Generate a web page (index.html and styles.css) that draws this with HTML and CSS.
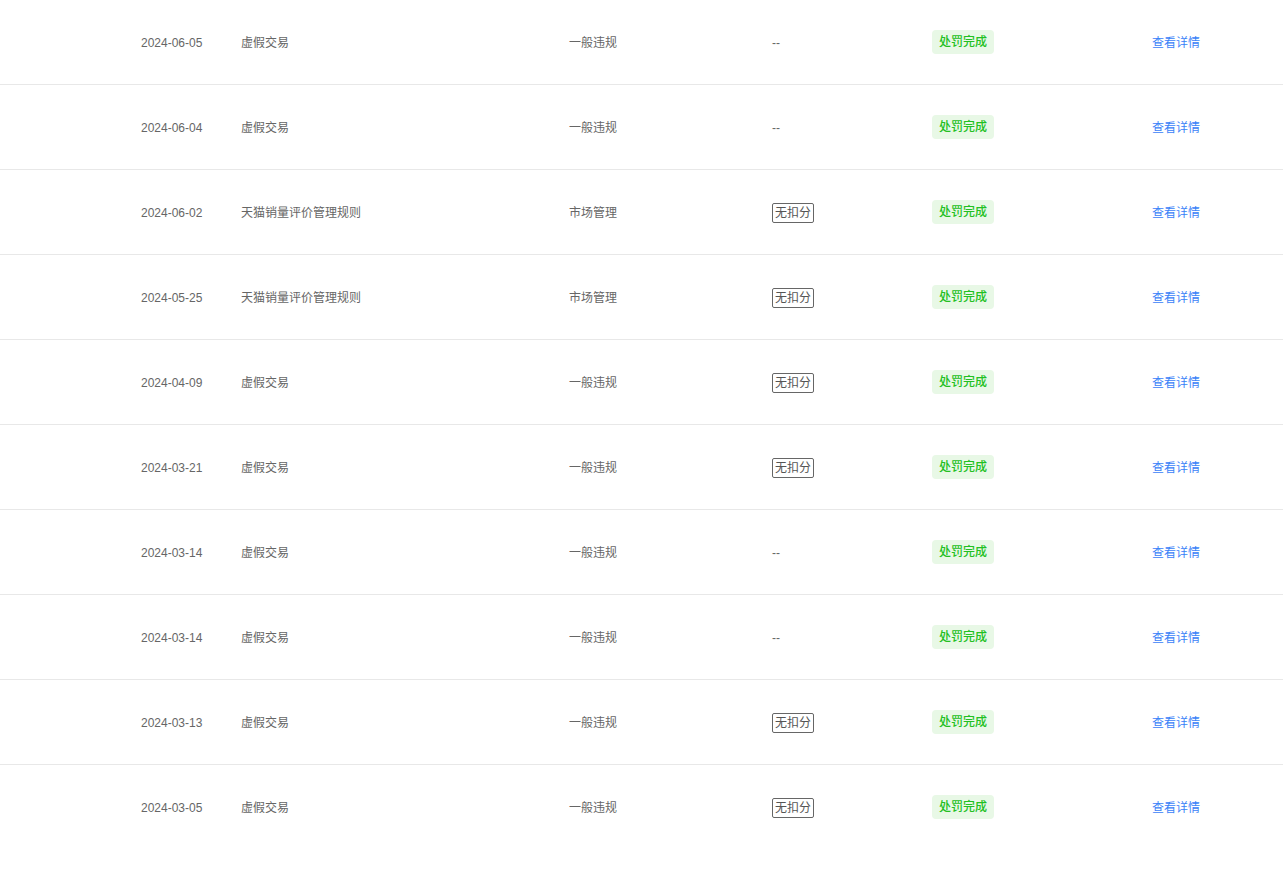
FILE: index.html
```html
<!DOCTYPE html>
<html lang="zh-CN">
<head>
<meta charset="utf-8">
<link rel="stylesheet" href="styles.css">
</head>
<body>
<div class="list">
  <div class="row"><span class="cell date">2024-06-05</span><span class="cell name">虚假交易</span><span class="cell type">一般违规</span><span class="cell score">--</span><span class="status"><span class="badge">处罚完成</span></span><span class="cell op"><a class="link">查看详情</a></span></div>
  <div class="row"><span class="cell date">2024-06-04</span><span class="cell name">虚假交易</span><span class="cell type">一般违规</span><span class="cell score">--</span><span class="status"><span class="badge">处罚完成</span></span><span class="cell op"><a class="link">查看详情</a></span></div>
  <div class="row"><span class="cell date">2024-06-02</span><span class="cell name">天猫销量评价管理规则</span><span class="cell type">市场管理</span><span class="cell score"><span class="tag">无扣分</span></span><span class="status"><span class="badge">处罚完成</span></span><span class="cell op"><a class="link">查看详情</a></span></div>
  <div class="row"><span class="cell date">2024-05-25</span><span class="cell name">天猫销量评价管理规则</span><span class="cell type">市场管理</span><span class="cell score"><span class="tag">无扣分</span></span><span class="status"><span class="badge">处罚完成</span></span><span class="cell op"><a class="link">查看详情</a></span></div>
  <div class="row"><span class="cell date">2024-04-09</span><span class="cell name">虚假交易</span><span class="cell type">一般违规</span><span class="cell score"><span class="tag">无扣分</span></span><span class="status"><span class="badge">处罚完成</span></span><span class="cell op"><a class="link">查看详情</a></span></div>
  <div class="row"><span class="cell date">2024-03-21</span><span class="cell name">虚假交易</span><span class="cell type">一般违规</span><span class="cell score"><span class="tag">无扣分</span></span><span class="status"><span class="badge">处罚完成</span></span><span class="cell op"><a class="link">查看详情</a></span></div>
  <div class="row"><span class="cell date">2024-03-14</span><span class="cell name">虚假交易</span><span class="cell type">一般违规</span><span class="cell score">--</span><span class="status"><span class="badge">处罚完成</span></span><span class="cell op"><a class="link">查看详情</a></span></div>
  <div class="row"><span class="cell date">2024-03-14</span><span class="cell name">虚假交易</span><span class="cell type">一般违规</span><span class="cell score">--</span><span class="status"><span class="badge">处罚完成</span></span><span class="cell op"><a class="link">查看详情</a></span></div>
  <div class="row"><span class="cell date">2024-03-13</span><span class="cell name">虚假交易</span><span class="cell type">一般违规</span><span class="cell score"><span class="tag">无扣分</span></span><span class="status"><span class="badge">处罚完成</span></span><span class="cell op"><a class="link">查看详情</a></span></div>
  <div class="row"><span class="cell date">2024-03-05</span><span class="cell name">虚假交易</span><span class="cell type">一般违规</span><span class="cell score"><span class="tag">无扣分</span></span><span class="status"><span class="badge">处罚完成</span></span><span class="cell op"><a class="link">查看详情</a></span></div>
</div>
</body>
</html>
```
FILE: styles.css
```css
html, body {
  margin: 0;
  padding: 0;
  background: #fff;
}
body {
  font-family: "Liberation Sans", "Noto Sans CJK SC", sans-serif;
  font-size: 12px;
  color: #666;
}
.list {
  display: flex;
  flex-direction: column;
}
.row {
  display: grid;
  grid-template-columns: 141px 100px 328px 203px 160px 220px 1fr;
  align-items: center;
  height: 84px;
  border-bottom: 1px solid #e8e8e8;
  line-height: 18px;
}
.row:last-child {
  border-bottom: none;
}
.row::before {
  content: "";
}
.cell {
  padding-top: 2px;
  color: #666;
}
.tag {
  display: inline-block;
  border: 1px solid #666;
  border-radius: 2px;
  padding: 0 2px;
  color: #555;
  line-height: 18px;
}
.badge {
  display: inline-block;
  background: #e8f8e6;
  color: #22c022;
  border-radius: 4px;
  padding: 0 7px;
  height: 24px;
  line-height: 24px;
  font-weight: 500;
}
.link {
  color: #3a82f8;
  cursor: pointer;
}
```
